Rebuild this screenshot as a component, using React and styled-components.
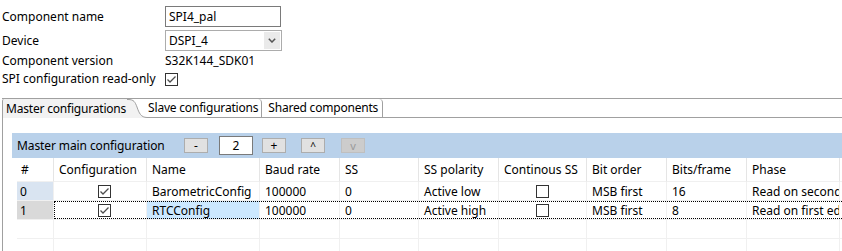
import React from 'react';
import styled, { createGlobalStyle } from 'styled-components';

const Global = createGlobalStyle`
  html, body { margin: 0; padding: 0; background: #fff; }
  body { font-family: "Noto Sans", "Segoe UI", sans-serif; font-size: 12px; color: #000; overflow: hidden; }
  * { box-sizing: border-box; }
`;

const Page = styled.div`
  width: 842px;
  height: 251px;
  overflow: hidden;
`;

const Form = styled.div`
  display: grid;
  grid-template-columns: 163px 1fr;
  grid-template-rows: 24px 21px 20px 16px;
  padding: 6px 0 0 2px;
  align-items: center;
`;

const Label = styled.div`
  line-height: 16px;
  white-space: nowrap;
  align-self: ${p => (p.$top ? 'start' : 'center')};
  margin-top: ${p => (p.$top ? '3px' : '0')};
`;

const TextInput = styled.div`
  align-self: start;
  width: 116px;
  height: 21px;
  border: 1px solid #7a7a7a;
  padding-left: 3px;
  display: flex;
  align-items: center;
  white-space: nowrap;
`;

const Select = styled.div`
  width: 117px;
  height: 21px;
  border: 1px solid #acacac;
  display: flex;
  align-items: center;
  justify-content: space-between;
  padding-left: 3px;
`;

const SelectArrow = styled.div`
  width: 16px;
  height: 17px;
  margin-right: 1px;
  background: #eaeaea;
  display: flex;
  align-items: center;
  justify-content: center;
`;

const Value = styled.div`
  line-height: 16px;
  white-space: nowrap;
`;

const Box = styled.div`
  width: 13px;
  height: 13px;
  border: 1px solid #333;
  background: #fff;
  display: flex;
  align-items: center;
  justify-content: center;
`;

const Checkbox = ({ checked }) => (
  <Box>
    {checked && (
      <svg width="11" height="11" viewBox="0 0 11 11">
        <polyline points="1.5,5.5 4,8 9.5,2.5" fill="none" stroke="#4d4d4d" strokeWidth="1.3" />
      </svg>
    )}
  </Box>
);

const TabStrip = styled.div`
  display: flex;
  height: 20px;
  margin: 11px 0 0 2px;
  border-top: 1px solid #a0a0a0;
  border-bottom: 1px solid #a0a0a0;
  letter-spacing: -0.2px;
`;

const ActiveTab = styled.div`
  display: flex;
  height: 19px;
  margin-bottom: -1px;
`;

const ActiveLabel = styled.div`
  background: #f2f2f2;
  border-left: 1px solid #a0a0a0;
  border-top-left-radius: 2px;
  padding: 0 1px 1px 3px;
  display: flex;
  align-items: center;
  white-space: nowrap;
`;

const Tab = styled.div`
  display: flex;
  align-items: center;
  height: 18px;
  padding: 0 ${p => p.$pr}px 1px ${p => p.$pl}px;
  border-right: 1px solid #a0a0a0;
  border-top-right-radius: 4px;
  white-space: nowrap;
`;

const Panel = styled.div`
  margin-left: 2px;
  border-left: 1px solid #a0a0a0;
  padding: 15px 0 0 9px;
  height: 140px;
`;

const Bar = styled.div`
  display: flex;
  align-items: center;
  height: 25px;
  background: #b9d1ea;
  padding-left: 5px;
  width: 840px;
`;

const BarTitle = styled.div`
  width: 167px;
  white-space: nowrap;
  letter-spacing: -0.1px;
`;

const SmallButton = styled.div`
  width: 24px;
  height: 15px;
  margin-left: ${p => p.$ml}px;
  background: ${p => (p.$disabled ? '#cccccc' : '#e1e1e1')};
  border: 1px solid ${p => (p.$disabled ? '#bfbfbf' : '#adadad')};
  color: ${p => (p.$disabled ? '#9a9a9a' : '#000')};
  font-size: ${p => p.$fs || 12}px;
  display: flex;
  align-items: center;
  justify-content: center;
  line-height: 1;
`;

const SpinInput = styled.div`
  width: 34px;
  height: 19px;
  margin-left: 11px;
  background: #fff;
  border: 1px solid #7a7a7a;
  display: flex;
  align-items: center;
  justify-content: center;
`;

const COLS = '37px 93px 113px 80px 79px 80px 88px 80px 80px 93px 60px';

const Table = styled.div`
  margin-left: 5px;
`;

const Row = styled.div`
  position: relative;
  display: grid;
  grid-template-columns: ${COLS};
  height: ${p => (p.$header ? 24 : 19)}px;
`;

const Cell = styled.div`
  display: flex;
  align-items: center;
  justify-content: ${p => (p.$center ? 'center' : 'flex-start')};
  padding-left: ${p => (p.$pl != null ? p.$pl : 5)}px;
  border-right: 1px solid ${p => (p.$header ? '#e5e5e5' : '#f0f0f0')};
  border-bottom: 1px solid #f0f0f0;
  background: ${p => p.$bg || 'transparent'};
  background-clip: padding-box;
  overflow: hidden;
  white-space: nowrap;
`;

const FocusRect = styled.div`
  position: absolute;
  left: 37px;
  right: -20px;
  top: 0;
  height: 18px;
  border: 1px dotted #000;
  pointer-events: none;
`;

const headers = ['#', 'Configuration', 'Name', 'Baud rate', 'SS', 'SS polarity', 'Continous SS', 'Bit order', 'Bits/frame', 'Phase', ''];

const rows = [
  { idx: '0', cfg: true, name: 'BarometricConfig', baud: '100000', ss: '0', pol: 'Active low', cont: false, order: 'MSB first', bits: '16', phase: 'Read on second edge', idxBg: '#d9e4f1' },
  { idx: '1', cfg: true, name: 'RTCConfig', baud: '100000', ss: '0', pol: 'Active high', cont: false, order: 'MSB first', bits: '8', phase: 'Read on first edge', idxBg: '#d9d9d9', nameBg: '#cce8ff', focus: true },
];

export default function App() {
  return (
    <Page>
      <Global />
      <Form>
        <Label $top>Component name</Label>
        <TextInput>SPI4_pal</TextInput>
        <Label>Device</Label>
        <Select>
          <span>DSPI_4</span>
          <SelectArrow>
            <svg width="8" height="5" viewBox="0 0 8 5">
              <polyline points="0.8,0.8 4,4 7.2,0.8" fill="none" stroke="#555" strokeWidth="1.5" />
            </svg>
          </SelectArrow>
        </Select>
        <Label>Component version</Label>
        <Value>S32K144_SDK01</Value>
        <Label>SPI configuration read-only</Label>
        <Checkbox checked />
      </Form>

      <TabStrip>
        <ActiveTab>
          <ActiveLabel>Master configurations</ActiveLabel>
          <svg width="20" height="19" viewBox="0 0 20 19">
            <path d="M0 0 L1 0 C 7 0, 8 3, 10 8 C 12 14, 14 18, 20 18 L20 19 L0 19 Z" fill="#f2f2f2" />
            <path d="M0 0.5 L1 0.5 C 7 0.5, 8 3, 10 8 C 12 14, 14 18.5, 20 18.5" fill="none" stroke="#a0a0a0" strokeWidth="1" />
          </svg>
        </ActiveTab>
        <Tab $pl={1} $pr={3}>Slave configurations</Tab>
        <Tab $pl={6} $pr={4}>Shared components</Tab>
      </TabStrip>

      <Panel>
        <Bar>
          <BarTitle>Master main configuration</BarTitle>
          <SmallButton $ml={0}>-</SmallButton>
          <SpinInput>2</SpinInput>
          <SmallButton $ml={9}>+</SmallButton>
          <SmallButton $ml={15} $fs={10}>^</SmallButton>
          <SmallButton $ml={16} $fs={11} $disabled>v</SmallButton>
        </Bar>
        <Table>
          <Row $header>
            {headers.map((h, i) => (
              <Cell key={i} $header $pl={i === 0 ? 4 : 5}>{h}</Cell>
            ))}
          </Row>
          {rows.map(r => (
            <Row key={r.idx}>
              <Cell $pl={3} $bg={r.idxBg}>{r.idx}</Cell>
              <Cell $center $pl={8}><Checkbox checked={r.cfg} /></Cell>
              <Cell $bg={r.nameBg}>{r.name}</Cell>
              <Cell>{r.baud}</Cell>
              <Cell>{r.ss}</Cell>
              <Cell>{r.pol}</Cell>
              <Cell $center $pl={0}><Checkbox checked={r.cont} /></Cell>
              <Cell>{r.order}</Cell>
              <Cell>{r.bits}</Cell>
              <Cell>{r.phase}</Cell>
              <Cell />
              {r.focus && <FocusRect />}
            </Row>
          ))}
          {[0, 1].map(k => (
            <Row key={'e' + k}>
              {headers.map((_, i) => <Cell key={i} />)}
            </Row>
          ))}
        </Table>
      </Panel>
    </Page>
  );
}
